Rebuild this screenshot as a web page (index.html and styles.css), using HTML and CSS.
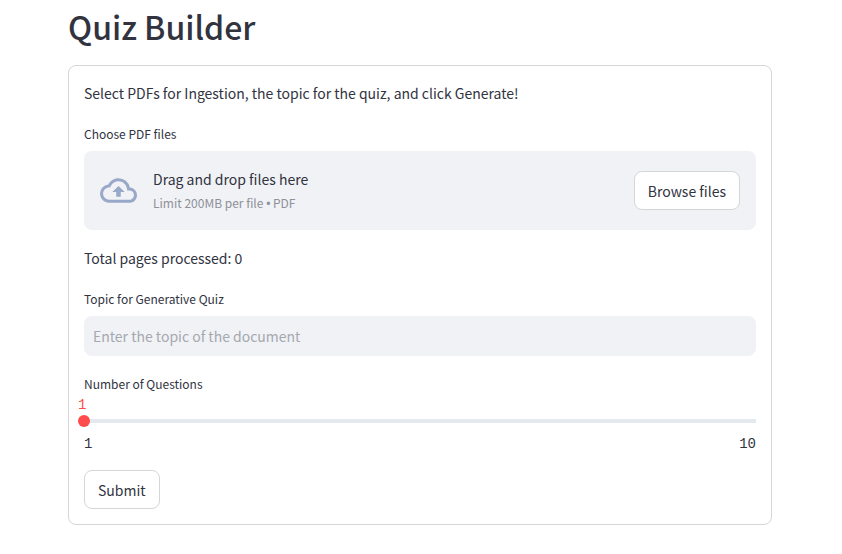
FILE: index.html
```html
<!DOCTYPE html>
<html lang="en">
<head>
<meta charset="utf-8">
<meta name="viewport" content="width=device-width, initial-scale=1">
<title>Quiz Builder</title>
<link rel="stylesheet" href="styles.css">
</head>
<body>
<main class="page">
  <h1 class="title">Quiz Builder</h1>
  <form class="card">
    <p class="text">Select PDFs for Ingestion, the topic for the quiz, and click Generate!</p>
    <section class="field" aria-labelledby="upload-label">
      <span class="label" id="upload-label">Choose PDF files</span>
      <div class="dropzone">
        <svg class="cloud" viewBox="0 0 24 24" fill="currentColor" aria-hidden="true"><path d="M19.35 10.04A7.49 7.49 0 0012 4C9.11 4 6.6 5.64 5.35 8.04A5.994 5.994 0 000 14c0 3.31 2.69 6 6 6h13c2.76 0 5-2.24 5-5 0-2.64-2.05-4.78-4.65-4.96zM19 18H6c-2.21 0-4-1.79-4-4 0-2.05 1.53-3.76 3.56-3.97l1.07-.11.5-.95A5.469 5.469 0 0112 6c2.62 0 4.88 1.86 5.39 4.43l.3 1.5 1.53.11A2.98 2.98 0 0122 15c0 1.65-1.35 3-3 3zM8 13h2.55v3h2.9v-3H16l-4-4-4 4z"/></svg>
        <div class="hint">
          <span class="hint-main">Drag and drop files here</span>
          <span class="hint-sub">Limit 200MB per file <span class="bullet">•</span> PDF</span>
        </div>
        <button class="button" type="button">Browse files</button>
      </div>
    </section>
    <p class="text">Total pages processed: 0</p>
    <div class="field">
      <label class="label" for="topic">Topic for Generative Quiz</label>
      <input class="input" id="topic" type="text" placeholder="Enter the topic of the document">
    </div>
    <div class="field">
      <label class="label" for="count">Number of Questions</label>
      <div class="slider">
        <output class="value" for="count">1</output>
        <div class="track"><input class="range" id="count" type="range" min="1" max="10" value="1"></div>
        <div class="ticks"><span>1</span><span>10</span></div>
      </div>
    </div>
    <button class="button submit" type="submit">Submit</button>
  </form>
</main>
</body>
</html>
```

FILE: styles.css
```css
* {
  box-sizing: border-box;
}

body {
  margin: 0;
  background: #fff;
  color: #31333f;
  font: 14px/24px "Noto Sans CJK SC", "Noto Sans", sans-serif;
}

.page {
  max-width: 844px;
  padding: 0 70px 24px 68px;
}

.title {
  margin: 0 0 18px;
  padding: 5px 0 0;
  font-size: 32px;
  line-height: 42px;
  font-weight: 500;
}

.card {
  display: flex;
  flex-direction: column;
  gap: 16px;
  padding: 15px;
  border: 1px solid #d6d6d9;
  border-radius: 8px;
}

.text {
  margin: 0;
  line-height: 25px;
}

.field {
  display: flex;
  flex-direction: column;
}

.label {
  font-size: 12px;
  line-height: 24px;
  margin-bottom: 5px;
}

.dropzone {
  display: flex;
  align-items: center;
  padding: 16px;
  border-radius: 8px;
  background: #f0f2f6;
}

.cloud {
  width: 37px;
  height: 37px;
  margin-right: 16px;
  color: #98a8c8;
}

.hint {
  display: flex;
  flex: 1;
  flex-direction: column;
}

.hint-sub {
  color: #8f9098;
  font-size: 12px;
  line-height: 23px;
}

.bullet {
  font-family: "Liberation Sans", sans-serif;
  line-height: 12px;
}

.button {
  height: 39px;
  padding: 0 13px;
  border: 1px solid #d6d6d9;
  border-radius: 8px;
  background: #fff;
  color: inherit;
  font: inherit;
}

.submit {
  align-self: flex-start;
}

.input {
  width: 100%;
  height: 40px;
  padding: 0 9px;
  border: 0;
  border-radius: 8px;
  background: #f0f2f6;
  color: inherit;
  font: inherit;
}

.input::placeholder {
  color: #a6a8af;
  opacity: 1;
}

.slider {
  font-family: "Liberation Mono", monospace;
  font-size: 14px;
  line-height: 20px;
}

.value {
  display: block;
  margin: -6px 0 0 -6px;
  color: #ff4b4b;
}

.track {
  height: 12px;
  background: linear-gradient(#e4e8ef, #e4e8ef) center / 100% 4px no-repeat;
}

.range {
  display: block;
  width: calc(100% + 12px);
  height: 12px;
  margin: 0 -6px;
  background: none;
  appearance: none;
}

.range::-webkit-slider-thumb {
  width: 12px;
  height: 12px;
  border-radius: 50%;
  background: #ff4b4b;
  appearance: none;
}

.ticks {
  display: flex;
  justify-content: space-between;
  padding-top: 7px;
}
```
